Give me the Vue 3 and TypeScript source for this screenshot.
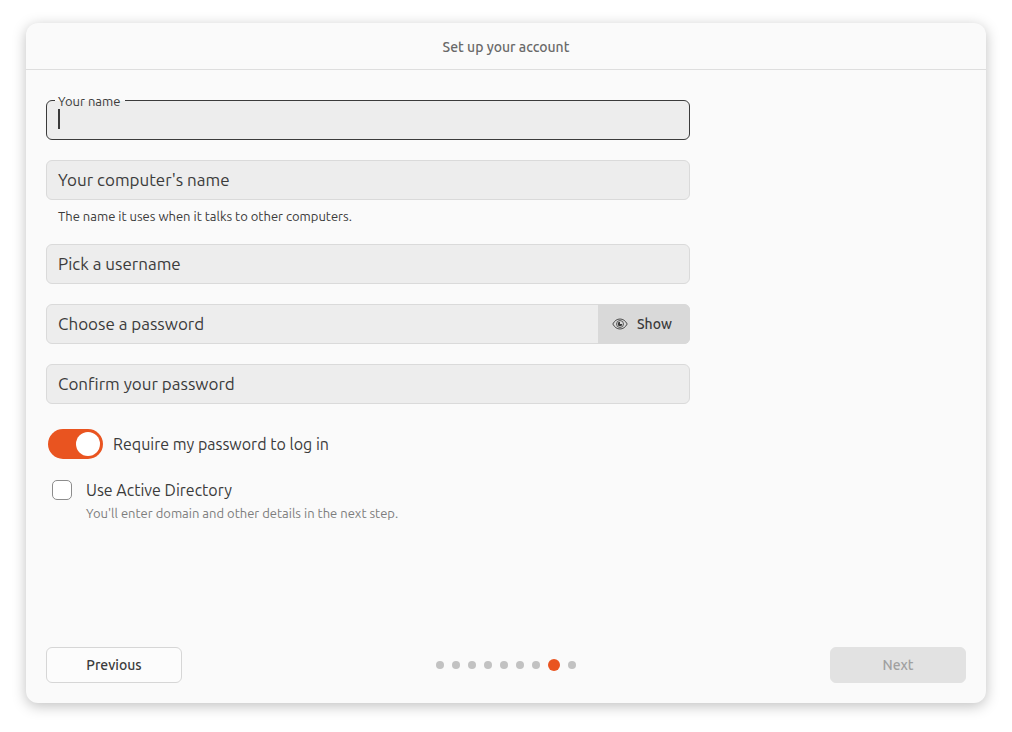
<script setup lang="ts">
import { onMounted, reactive, ref } from 'vue'

interface Field {
  id: string
  label: string
  secret?: boolean
  toggle?: boolean
  hint?: string
}

const fields: Field[] = [
  { id: 'name', label: 'Your name' },
  {
    id: 'computer',
    label: "Your computer's name",
    hint: 'The name it uses when it talks to other computers.',
  },
  { id: 'username', label: 'Pick a username' },
  { id: 'password', label: 'Choose a password', secret: true, toggle: true },
  { id: 'confirm', label: 'Confirm your password', secret: true },
]

const values = reactive<Record<string, string>>({
  name: '',
  computer: '',
  username: '',
  password: '',
  confirm: '',
})
const active = ref('name')
const reveal = ref(false)
const requirePassword = ref(true)
const activeDirectory = ref(false)
const steps = 9
const currentStep = 8

onMounted(() => document.getElementById('name')?.focus())
</script>

<template>
  <div class="page">
    <form class="card" @submit.prevent>
      <header class="title-bar">
        <h1>Set up your account</h1>
      </header>

      <main class="body">
        <div class="fields">
          <div v-for="field in fields" :key="field.id">
            <div
              class="field"
              :class="{ focused: active === field.id, floating: active === field.id || values[field.id] }"
            >
              <label :for="field.id">{{ field.label }}</label>
              <input
                :id="field.id"
                v-model="values[field.id]"
                :class="{ empty: !values[field.id] }"
                :type="field.secret && !reveal ? 'password' : 'text'"
                autocomplete="off"
                @focus="active = field.id"
              />
              <span v-if="active === field.id && !values[field.id]" class="caret"></span>
              <button v-if="field.toggle" type="button" class="show" @click="reveal = !reveal">
                <svg viewBox="0 0 16 12" width="16" height="12" fill="none" aria-hidden="true">
                  <path
                    d="M.8 6C2.6 2.7 5 1 8 1s5.400 1.700 7.200 5C13.400 9.300 11 11 8 11S2.600 9.300.8 6Z"
                    stroke="currentColor"
                    stroke-width=".9"
                  />
                  <circle cx="8" cy="6" r="3.500" stroke="currentColor" stroke-width=".8" />
                  <path d="M8 3.700V6h2.300A2.300 2.300 0 1 1 8 3.700Z" fill="currentColor" />
                </svg>
                {{ reveal ? 'Hide' : 'Show' }}
              </button>
            </div>
            <p v-if="field.hint" class="hint">{{ field.hint }}</p>
          </div>
        </div>

        <label class="option switch-row">
          <input v-model="requirePassword" class="switch" type="checkbox" role="switch" />
          <span>Require my password to log in</span>
        </label>

        <label class="option check-row">
          <input v-model="activeDirectory" class="check" type="checkbox" />
          <span>
            Use Active Directory
            <small>You'll enter domain and other details in the next step.</small>
          </span>
        </label>
      </main>

      <footer class="footer">
        <button type="button" class="nav">Previous</button>
        <div class="dots">
          <span v-for="n in steps" :key="n" class="dot" :class="{ current: n === currentStep }"></span>
        </div>
        <button type="submit" class="nav" disabled>Next</button>
      </footer>
    </form>
  </div>
</template>

<style>
body {
  background: #fff;
}
</style>

<style scoped>
.page {
  box-sizing: border-box;
  min-height: 100vh;
  padding: 23px 26px 29px;
  display: flex;
  color: #3b3b3b;
  font-family: Ubuntu, 'Noto Sans', sans-serif;
  font-size: 16px;
  line-height: 24px;
}

.page *,
.page *::before {
  box-sizing: border-box;
}

.card {
  flex: 1;
  min-width: 0;
  display: flex;
  flex-direction: column;
  background: #fafafa;
  border-radius: 12px;
  box-shadow: 0 3px 14px rgba(0, 0, 0, 0.25);
}

.title-bar {
  padding: 12px 20px 10px;
  border-bottom: 1px solid #dedede;
  text-align: center;
}

h1 {
  margin: 0;
  color: #696969;
  font-size: 14px;
  font-weight: 500;
  line-height: 24px;
}

.body {
  flex: 1;
  padding: 30px 20px 20px;
}

.fields {
  width: 70%;
  display: grid;
  gap: 20px;
}

.field {
  position: relative;
  display: flex;
  height: 40px;
  border: 1px solid #dadada;
  border-radius: 6px;
  background: #ededed;
}

.field.focused {
  border-color: #3b3b3b;
}

.field label {
  position: absolute;
  left: 11px;
  top: 7px;
  font-size: 17px;
  pointer-events: none;
}

.field.floating label {
  left: 8px;
  top: -8px;
  padding: 0 5px 0 3px;
  background: linear-gradient(#fafafa 50%, #ededed 50%);
  font-size: 13px;
  line-height: 16px;
}

.field input {
  flex: 1;
  min-width: 0;
  padding: 0 11px;
  border: 0;
  outline: 0;
  background: transparent;
  color: inherit;
  font: inherit;
}

.field input.empty {
  caret-color: transparent;
}

.caret {
  position: absolute;
  left: 11px;
  top: 8px;
  width: 2px;
  height: 20px;
  background: #3b3b3b;
}

.show {
  width: 92px;
  margin: -1px;
  padding: 0 0 0 14px;
  display: flex;
  align-items: center;
  gap: 9px;
  border: 0;
  border-radius: 0 6px 6px 0;
  background: #d9d9d9;
  color: #3b3b3b;
  font: inherit;
  font-size: 14px;
  font-weight: 500;
}

.hint {
  margin: 8px 0 0 12px;
  font-size: 13px;
  line-height: 16px;
}

.option {
  display: flex;
  width: fit-content;
}

.switch-row {
  margin: 25px 0 0 2px;
  align-items: center;
  gap: 10px;
}

.switch {
  appearance: none;
  width: 55px;
  height: 30px;
  margin: 0;
  padding: 3px;
  display: flex;
  border-radius: 15px;
  background: #c8c8c8;
}

.switch::before {
  content: '';
  width: 24px;
  height: 24px;
  border-radius: 50%;
  background: #fff;
}

.switch:checked {
  justify-content: flex-end;
  background: #e95420;
}

.check-row {
  margin: 19px 0 0 6px;
  gap: 14px;
}

.check {
  appearance: none;
  width: 20px;
  height: 20px;
  margin: 2px 0 0;
  border: 1px solid #8c8c8c;
  border-radius: 5px;
  background: #fff;
}

.check:checked {
  border-color: #e95420;
  background: #e95420;
}

.check-row small {
  display: block;
  margin-top: 3px;
  color: #7d7d7d;
  font-size: 13px;
  line-height: 16px;
}

.footer {
  padding: 0 20px 20px;
  display: flex;
  align-items: center;
  justify-content: space-between;
}

.nav {
  width: 136px;
  height: 36px;
  border: 1px solid #d6d6d6;
  border-radius: 6px;
  background: #fcfcfc;
  color: #3b3b3b;
  font: inherit;
  font-size: 14px;
  font-weight: 500;
}

.nav:disabled {
  border-color: #e2e2e2;
  background: #e2e2e2;
  color: #a0a0a0;
}

.dots {
  display: flex;
  align-items: center;
  gap: 8px;
}

.dot {
  width: 8px;
  height: 8px;
  border-radius: 50%;
  background: #c2c2c2;
}

.dot.current {
  width: 12px;
  height: 12px;
  background: #e95420;
}
</style>
